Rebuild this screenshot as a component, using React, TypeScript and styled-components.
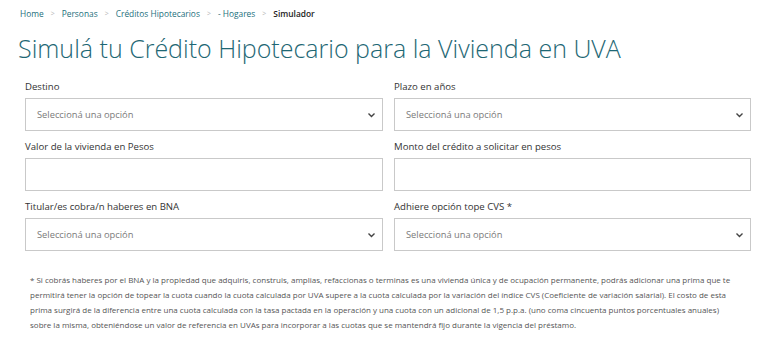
import styled, { createGlobalStyle } from "styled-components";
import { Fragment } from "react";

const GlobalStyle = createGlobalStyle`
  body {
    margin: 0;
    background: #ffffff;
    font-family: "Open Sans", "Liberation Sans", sans-serif;
  }
`;

const Page = styled.div`
  width: 770px;
  height: 343px;
  overflow: hidden;
  padding: 6px 19px 0 20px;
  box-sizing: border-box;
`;

const Crumbs = styled.nav`
  display: flex;
  align-items: center;
  gap: 7px;
  font-size: 8.4px;
  height: 14px;
`;

const Crumb = styled.span<{ $current?: boolean }>`
  color: ${(p) => (p.$current ? "#222" : "#1d6f7c")};
  font-weight: ${(p) => (p.$current ? 600 : 400)};
`;

const Sep = styled.span`
  color: #b5b5b5;
  font-size: 7px;
`;

const Title = styled.h1`
  margin: 10px 0 0 -2px;
  font-size: 25px;
  font-weight: 300;
  color: #1e6774;
  line-height: 36px;
`;

const Form = styled.div`
  display: grid;
  grid-template-columns: 358px 357px;
  column-gap: 11px;
  row-gap: 8px;
  margin: 13px 0 0 5px;
`;

const Field = styled.div`
  display: flex;
  flex-direction: column;
`;

const Label = styled.label`
  font-size: 9.6px;
  color: #333;
  height: 19px;
  line-height: 16px;
`;

const Box = styled.div`
  height: 33px;
  border: 1px solid #c9c9c9;
  box-sizing: border-box;
  display: flex;
  align-items: center;
  justify-content: space-between;
  padding: 0 6px 0 11px;
  font-size: 9.3px;
  color: #7a7a7a;
`;

const Note = styled.p`
  margin: 21px 0 0 10px;
  width: 730px;
  font-size: 8px;
  line-height: 15px;
  color: #555;
  white-space: nowrap;
`;

const Chevron = () => (
  <svg width="9" height="6" viewBox="0 0 9 6">
    <path d="M1.5 1.5 L4.5 4.5 L7.5 1.5" fill="none" stroke="#444" strokeWidth="1.4" />
  </svg>
);

const Select = ({ label }: { label: string }) => (
  <Field>
    <Label>{label}</Label>
    <Box>
      <span>Seleccioná una opción</span>
      <Chevron />
    </Box>
  </Field>
);

const Input = ({ label }: { label: string }) => (
  <Field>
    <Label>{label}</Label>
    <Box />
  </Field>
);

const crumbs = ["Home", "Personas", "Créditos Hipotecarios", "- Hogares"];

const noteLines = [
  "* Si cobrás haberes por el BNA y la propiedad que adquiris, construis, amplias, refaccionas o terminas es una vivienda única y de ocupación permanente, podrás adicionar una prima que te",
  "permitirá tener la opción de topear la cuota cuando la cuota calculada por UVA supere a la cuota calculada por la variación del índice CVS (Coeficiente de variación salarial). El costo de esta",
  "prima surgirá de la diferencia entre una cuota calculada con la tasa pactada en la operación y una cuota con un adicional de 1,5 p.p.a. (uno coma cincuenta puntos porcentuales anuales)",
  "sobre la misma, obteniéndose un valor de referencia en UVAs para incorporar a las cuotas que se mantendrá fijo durante la vigencia del préstamo.",
];

export default function App() {
  return (
    <Page>
      <GlobalStyle />
      <Crumbs>
        {crumbs.map((c) => (
          <Fragment key={c}>
            <Crumb>{c}</Crumb>
            <Sep>&gt;</Sep>
          </Fragment>
        ))}
        <Crumb $current>Simulador</Crumb>
      </Crumbs>
      <Title>Simulá tu Crédito Hipotecario para la Vivienda en UVA</Title>
      <Form>
        <Select label="Destino" />
        <Select label="Plazo en años" />
        <Input label="Valor de la vivienda en Pesos" />
        <Input label="Monto del crédito a solicitar en pesos" />
        <Select label="Titular/es cobra/n haberes en BNA" />
        <Select label="Adhiere opción tope CVS *" />
      </Form>
      <Note>
        {noteLines.map((line, i) => (
          <Fragment key={i}>
            {line}
            {i < noteLines.length - 1 && <br />}
          </Fragment>
        ))}
      </Note>
    </Page>
  );
}
